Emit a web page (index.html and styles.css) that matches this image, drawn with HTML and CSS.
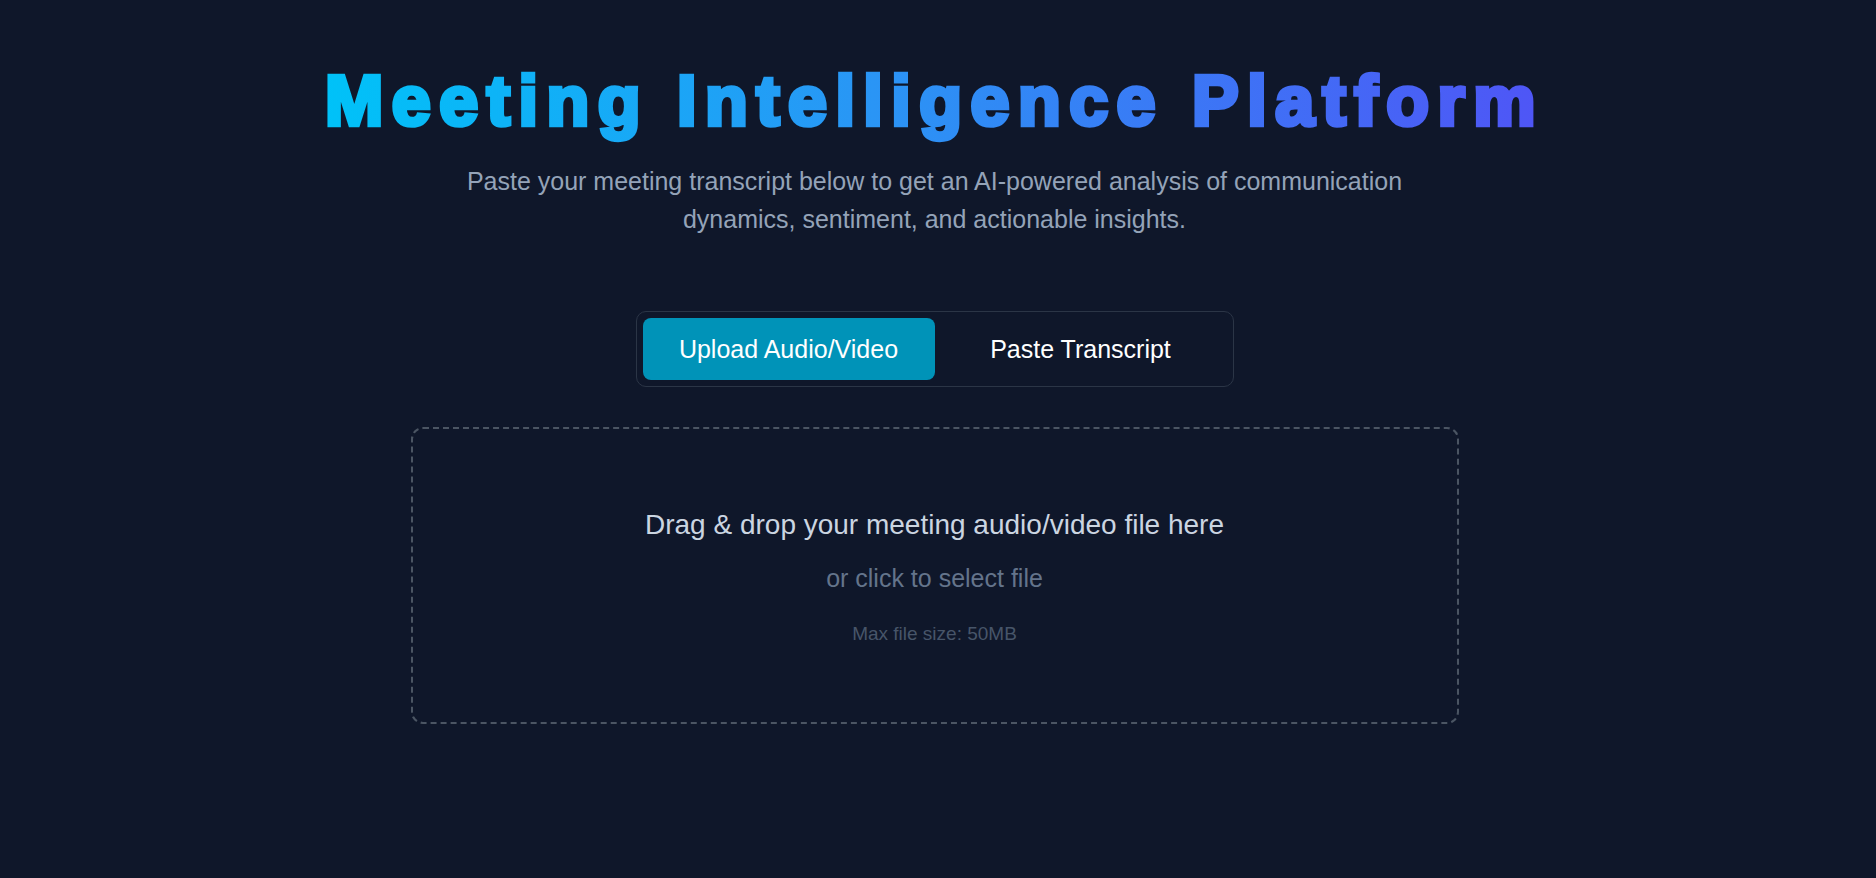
FILE: index.html
```html
<!DOCTYPE html>
<html lang="en">
<head>
<meta charset="utf-8">
<title>Meeting Intelligence Platform</title>
<link rel="stylesheet" href="styles.css">
</head>
<body>
<main class="page">
  <header class="hero">
    <h1 class="title">Meeting Intelligence Platform</h1>
    <p class="subtitle">Paste your meeting transcript below to get an AI-powered analysis of communication dynamics, sentiment, and actionable insights.</p>
  </header>
  <div class="tabs">
    <button class="tab tab-active">Upload Audio/Video</button>
    <button class="tab">Paste Transcript</button>
  </div>
  <section class="dropzone">
    <p class="drop-main">Drag &amp; drop your meeting audio/video file here</p>
    <p class="drop-sub">or click to select file</p>
    <p class="drop-note">Max file size: 50MB</p>
  </section>
</main>
</body>
</html>
```
FILE: styles.css
```css
* { box-sizing: border-box; }
html, body {
  margin: 0;
  padding: 0;
  background: #0f172a;
  height: 100%;
}
body {
  font-family: "Liberation Sans", Arial, sans-serif;
  color: #e2e8f0;
}
.page {
  display: flex;
  flex-direction: column;
  align-items: center;
  padding: 56px 7px 0 0;
}
.hero {
  display: flex;
  flex-direction: column;
  align-items: center;
  text-align: center;
}
.title {
  margin: 0;
  font-size: 70px;
  line-height: 90px;
  font-weight: 700;
  letter-spacing: 8.5px;
  background: linear-gradient(90deg, #00c2f8 0%, #2a95f5 45%, #4f55f6 100%);
  -webkit-background-clip: text;
  background-clip: text;
  color: transparent;
  -webkit-text-fill-color: transparent;
  -webkit-text-stroke: 4.5px transparent;
}
.subtitle {
  margin: 16px 0 0;
  width: 980px;
  font-size: 25px;
  line-height: 38px;
  color: #94a3b8;
}
.tabs {
  margin-top: 73px;
  width: 598px;
  display: flex;
  padding: 6px;
  border: 1px solid #2b3546;
  border-radius: 10px;
}
.tab {
  flex: 1;
  height: 62px;
  border: 0;
  border-radius: 8px;
  background: transparent;
  color: #ffffff;
  font-family: "Liberation Sans", Arial, sans-serif;
  font-size: 25px;
  cursor: pointer;
}
.tab-active {
  background: #0093b8;
}
.dropzone {
  margin-top: 40px;
  width: 1048px;
  height: 297px;
  border: 2px dashed #4b5563;
  border-radius: 12px;
  display: flex;
  flex-direction: column;
  align-items: center;
  padding-top: 79px;
}
.dropzone p { margin: 0; }
.drop-main {
  font-size: 28px;
  line-height: 34px;
  color: #cbd5e1;
}
.drop-sub {
  margin-top: 21px !important;
  font-size: 25px;
  line-height: 30px;
  color: #64748b;
}
.drop-note {
  margin-top: 29px !important;
  font-size: 19px;
  line-height: 23px;
  color: #475569;
}
```
